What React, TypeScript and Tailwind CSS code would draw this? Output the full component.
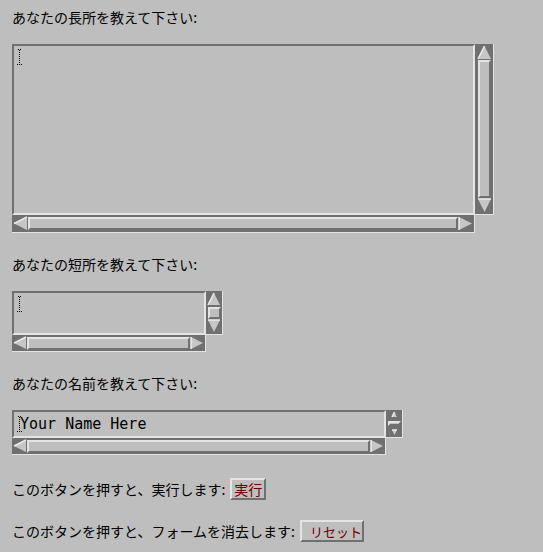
import React from 'react';

const jp = { fontFamily: '"Noto Sans CJK JP", "DejaVu Sans", sans-serif' };
const mono = { fontFamily: '"DejaVu Sans Mono", "Liberation Mono", monospace' };

type Dir = 'up' | 'down' | 'left' | 'right';

const Arrow = ({ dir, size }: { dir: Dir; size: number }) => {
  const s = size;
  const pts: Record<Dir, string> = {
    up: `${s / 2},1 ${s - 1},${s - 1} 1,${s - 1}`,
    down: `1,1 ${s - 1},1 ${s / 2},${s - 1}`,
    left: `1,${s / 2} ${s - 1},1 ${s - 1},${s - 1}`,
    right: `1,1 ${s - 1},${s / 2} 1,${s - 1}`,
  };
  const light: Record<Dir, string> = {
    up: `${s / 2},1 1,${s - 1}`,
    down: `1,1 ${s - 1},1`,
    left: `1,${s / 2} ${s - 1},1`,
    right: `1,1 1,${s - 1}`,
  };
  return (
    <svg width={s} height={s} viewBox={`0 0 ${s} ${s}`} className="shrink-0">
      <polygon points={pts[dir]} fill="#c6c6c6" />
      <polyline points={light[dir]} fill="none" stroke="#ececec" strokeWidth="1.5" />
    </svg>
  );
};

// dotted I-beam caret drawn in the text areas
const Caret = () => (
  <svg width="6" height="16" viewBox="0 0 6 16" className="shrink-0">
    <rect x="1" y="0" width="1" height="1" fill="#000" />
    <rect x="3" y="0" width="1" height="1" fill="#000" />
    {[1, 3, 5, 7, 9, 11, 13].map((y) => (
      <rect key={y} x="2" y={y} width="1" height="1" fill="#000" />
    ))}
    <rect x="0" y="15" width="1" height="1" fill="#000" />
    <rect x="2" y="15" width="1" height="1" fill="#000" />
    <rect x="4" y="15" width="1" height="1" fill="#000" />
  </svg>
);

const Thumb = ({ className }: { className: string }) => (
  <div
    className={`bg-[#bebebe] border-t-2 border-l-2 border-t-[#e4e4e4] border-l-[#e4e4e4] border-b-2 border-r-2 border-b-[#707070] border-r-[#707070] ${className}`}
  />
);

interface BoxProps {
  w: number;
  h: number;
  vw: number;
  hh: number;
  kind: 'big' | 'small' | 'tiny';
  children?: React.ReactNode;
}

const ScrollBox = ({ w, h, vw, hh, kind, children }: BoxProps) => {
  const arrow = kind === 'big' ? 15 : kind === 'small' ? 14 : 7;
  return (
    <div className="flex flex-col">
      <div className="flex">
        <div
          className="bg-[#bebebe] border-2 border-t-[#707070] border-l-[#707070] border-b-[#e4e4e4] border-r-[#e4e4e4] overflow-hidden"
          style={{ width: w, height: h }}
        >
          {children}
        </div>
        <div
          className="bg-[#707070] border-r border-b border-r-[#e4e4e4] border-b-[#e4e4e4] flex flex-col items-center pt-[1px] pb-[1px]"
          style={{ width: vw, height: h }}
        >
          <Arrow dir="up" size={arrow} />
          {kind === 'big' && <Thumb className="flex-1 w-[13px]" />}
          {kind === 'small' && (
            <div className="flex-1 flex items-center">
              <Thumb className="w-[13px] h-[12px]" />
            </div>
          )}
          {kind === 'tiny' && (
            <div className="flex-1 flex items-center">
              <Thumb className="w-[13px] h-[5px]" />
            </div>
          )}
          <Arrow dir="down" size={arrow} />
        </div>
      </div>
      <div
        className="bg-[#707070] border-r border-b border-r-[#e4e4e4] border-b-[#e4e4e4] flex items-center pl-[1px] pr-[1px]"
        style={{ width: w, height: hh }}
      >
        <Arrow dir="left" size={hh - 3} />
        <Thumb className="flex-1 h-[13px]" />
        <Arrow dir="right" size={hh - 3} />
      </div>
    </div>
  );
};

const Button = ({ label, className }: { label: string; className: string }) => (
  <div
    className={`h-[22px] shrink-0 whitespace-nowrap bg-[#bebebe] border-2 border-t-[#e4e4e4] border-l-[#e4e4e4] border-b-[#707070] border-r-[#707070] flex items-center text-[#6b0000] leading-none ${className}`}
    style={jp}
  >
    {label}
  </div>
);

export default function App() {
  return (
    <div className="w-[543px] h-[552px] bg-[#bebebe] pl-[12px] text-[14px] text-black leading-[16px] overflow-hidden" style={jp}>
      <p className="mt-[9px]">あなたの長所を教えて下さい:</p>
      <div className="mt-[19px]">
        <ScrollBox w={463} h={171} vw={19} hh={18} kind="big">
          <div className="pl-[3px] pt-[3px]">
            <Caret />
          </div>
        </ScrollBox>
      </div>

      <p className="mt-[23px]">あなたの短所を教えて下さい:</p>
      <div className="mt-[19px]">
        <ScrollBox w={194} h={44} vw={17} hh={17} kind="small">
          <div className="pl-[3px] pt-[3px]">
            <Caret />
          </div>
        </ScrollBox>
      </div>

      <p className="mt-[23px]">あなたの名前を教えて下さい:</p>
      <div className="mt-[19px]">
        <ScrollBox w={374} h={28} vw={17} hh={17} kind="tiny">
          <div className="flex items-center h-full pl-[3px]">
            <Caret />
            <span className="text-[15px] leading-none -ml-[3px]" style={mono}>
              Your Name Here
            </span>
          </div>
        </ScrollBox>
      </div>

      <div className="mt-[23px] flex items-center h-[22px]">
        <span className="whitespace-nowrap">このボタンを押すと、実行します:</span>
        <Button label="実行" className="ml-[5px] w-[36px] justify-center text-[14px]" />
      </div>
      <div className="mt-[20px] flex items-center h-[22px]">
        <span className="whitespace-nowrap">このボタンを押すと、フォームを消去します:</span>
        <Button label="リセット" className="ml-[5px] w-[64px] justify-start pl-[8px] text-[13px]" />
      </div>
    </div>
  );
}
